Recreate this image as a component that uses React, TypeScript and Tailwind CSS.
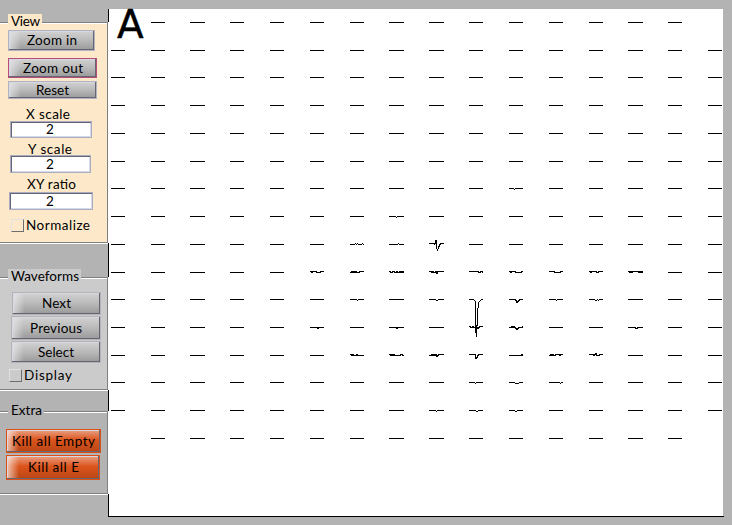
import React from "react";

const FONT = "font-['Lato','Noto_Sans',sans-serif]";

const rowY = [22, 50, 77, 105, 133, 161, 188, 216, 244, 272, 299, 327, 355, 382, 410, 438];
const colX = [111, 151, 190, 230, 270, 310, 350, 389, 429, 469, 509, 549, 589, 628, 668, 708];
const colW = [14, 14, 15, 14, 14, 14, 14, 15, 15, 14, 14, 14, 14, 15, 14, 14];

/* Pixel offsets of every sample below (+) or above (-) the baseline. */
const waves: Record<string, number[]> = {
  "6-10": [0, 0, 0, 0, 0, 1, 0, 0, 0, 0, 0, 0, 0, 0],
  "7-7": [0, 0, 0, 0, 0, 0, 0, 1, 0, 0, 0, 0, 0, 0, 0],
  "8-6": [0, 0, 0, 0, 0, -1, 0, -1, 0, 0, 0, 0, -1, 0],
  "8-7": [0, 0, 0, 0, 0, 0, 0, 0, 0, -1, 0, 0, 0, 0, 0],
  "9-5": [-1, 0, -1, -1, -1, -1, 0, 0, 0, 0, -1, -1, -1, -1],
  "9-6": [0, -1, 0, -1, 0, -1, 0, 0, 0, -1, -1, -1, -1, -1],
  "9-7": [-1, 0, 0, -1, -1, 0, 0, -1, 0, 0, -1, 0, -1, 0, -1],
  "9-8": [-1, -1, 0, -1, 0, 0, -1, 1, -1, -1, -1, -1, -1, -1, -1],
  "9-9": [-1, -1, -1, -1, -1, -1, -1, -1, -1, 0, 0, -1, -1, 0],
  "9-10": [-1, 0, -1, -1, -1, -1, 0, 0, 0, 0, 0, 0, -1, -1],
  "9-11": [-1, -1, -1, -1, -1, 0, 0, 0, 0, 0, 0, -1, -1, -1],
  "9-12": [-1, 0, -1, -1, -1, -1, -1, 0, 0, -1, -1, -1, -1, -1],
  "9-13": [-1, 0, -1, 0, -1, -1, -1, -1, -1, -1, 0, -1, 0, -1, 0],
  "10-6": [0, 0, 0, 0, 0, 0, 0, 1, 0, 0, 0, 0, 0, 0],
  "10-8": [0, 0, 0, 0, 0, 0, 0, 1, 1, 0, 0, 0, 0, 0, 0],
  "10-10": [0, 0, 0, 0, 0, 0, 1, 3, 2, 1, 0, 0, 0, 0],
  "10-11": [0, 0, 0, 0, 0, 0, 0, 1, 0, 0, 0, 0, 0, 0],
  "10-12": [0, 0, 0, 0, 0, 0, 1, 1, 0, 1, 0, 0, 0, 0],
  "11-5": [0, 0, 0, 0, 0, 0, 0, 1, 0, 0, 0, 0, 0, 0],
  "11-7": [0, 0, 0, 0, 0, 0, 0, 1, 0, 0, 0, 0, 0, 0, 0],
  "11-9": [-1, 0, 0, -1, 0, 0, 0, 0, 1, 0, -1, -1, -1, -1],
  "11-10": [0, 0, -1, 0, -1, 0, 1, 2, 1, 0, 0, 0, 0, -1],
  "11-13": [0, 0, 0, 0, 0, 0, 0, 1, 1, 0, 0, 0, 0, 0, 0],
  "12-6": [-1, 0, -1, 0, 0, 0, -1, 0, 0, 0, 0, 0, 0, 0],
  "12-7": [-1, 0, -1, 0, -1, 0, 0, 0, 0, 0, 0, -1, -1, 0, 0],
  "12-8": [0, 0, -1, 0, -1, 0, -1, 1, 0, -1, -1, -1, -1, -1, -1],
  "12-9": [-1, -1, -1, -1, -1, -1, 3, 2, 0, -1, -1, -1, -1, -1],
  "12-10": [0, 0, 0, 0, 0, 0, 0, 0, 0, 0, 0, 0, -1, 0],
  "12-11": [0, -1, 0, -1, 0, 0, -1, -1, -1, -1, 0, -1, -1, -1],
  "12-12": [-1, -1, -1, -1, 0, -1, -2, 0, 0, 0, -1, -1, -1, -1],
  "13-9": [0, 0, 0, 0, 0, 0, 1, 0, 0, 0, 0, 0, 0, 0],
  "13-10": [0, 0, 0, 0, 0, 0, 1, 1, 1, 1, 0, 0, 0, 0],
  "13-11": [0, 0, 0, 0, 0, 0, 0, 0, 0, 0, 0, 1, 0, 0],
  "14-8": [0, 0, 0, 0, 0, 0, 0, 1, 0, 0, 0, 0, 0, 0, 0],
  "14-9": [0, 0, 0, 0, 0, 0, 0, 1, 1, 0, 0, 0, 0, 0],
  "14-10": [0, 0, 0, 0, 0, 0, 1, 1, 0, 0, 0, 0, 0, 0],
};

const spikeUnit =
  "M429 243h6v-3h2v9h1v-3h1v-2h1v-1h4v1h-3v1h-1v2h-1v2h-1v2h-1v-2h-1v-5h-1v1h-1v-1h-5z";
const tallUnit =
  "M469 299h5v1h-5zM474 300h1v1h-1zM475 301h1v32h-1zM476 325h1v12h-1zM477 308h1v18h-1zM478 302h1v6h-1zM479 301h1v1h-1zM480 300h1v1h-1zM481 299h2v1h-2z";

function trace(r: number, c: number) {
  const key = r + "-" + c;
  if (key === "8-8") return spikeUnit;
  const wave = waves[key];
  if (key === "10-9") return tallUnit;
  if (!wave) return `M${colX[c]} ${rowY[r]}h${colW[c]}v1h-${colW[c]}z`;
  const joined = r === 9 || r === 11 || r === 12 || key === "10-10";
  return wave
    .map((d, i) => {
      // Noisy rows join neighbouring samples with a vertical stroke.
      const prev = joined && i > 0 ? wave[i - 1] : d;
      const top = Math.min(prev, d);
      return `M${colX[c] + i} ${rowY[r] + top}h1v${Math.abs(prev - d) + 1}h-1z`;
    })
    .join("");
}

function Electrodes() {
  const paths: string[] = [];
  rowY.forEach((_, r) =>
    colX.forEach((_x, c) => {
      if ((r === 0 || r === 15) && (c === 0 || c === 15)) return;
      paths.push(trace(r, c));
    })
  );
  return (
    <svg className="block" width="614" height="507" viewBox="109 9 614 507" shapeRendering="crispEdges">
      {paths.map((d, i) => (
        <path key={i} d={d} fill="#000" />
      ))}
    </svg>
  );
}

function Label({ text, width }: { text: string; width: number }) {
  return (
    <svg className="block shrink-0 overflow-visible" width={width} height="14">
      <text x="0" y="11" fontSize="13.5" textLength={width} lengthAdjust="spacing" className="fill-black">
        {text}
      </text>
    </svg>
  );
}

function Button({ text, width, box, tone = "grey" }: { text: string; width: number; box: string; tone?: string }) {
  const skin =
    tone === "orange"
      ? "border-[#dc5018] bg-[linear-gradient(90deg,rgba(255,255,255,.65)_0,rgba(255,255,255,0)_12px),linear-gradient(180deg,#e9a184_0%,#dc541c_45%,#b94615_100%)]"
      : (tone === "active" ? "border-[#b84c7c] " : tone === "plain" ? "border-[#b3b3b8] " : "border-[#b0b3c0] ") +
        "bg-[linear-gradient(90deg,rgba(235,235,240,.7)_0,rgba(235,235,240,0)_12px),linear-gradient(180deg,#d2d2d2_0%,#b9b9b9_50%,#999_100%)]";
  return (
    <div className={`flex shrink-0 items-center justify-center border pt-px shadow-[inset_-1px_-1px_#656574,inset_1px_1px_#d8d8e0] ${skin} ${box}`}>
      <Label text={text} width={width} />
    </div>
  );
}

function Input({ box }: { box: string }) {
  return (
    <div className={`flex shrink-0 items-center justify-center border border-[#a9adbf] bg-white pt-px pr-[2px] shadow-[inset_1px_1px_#656574,inset_-1px_-1px_#d6d9e6] ${box}`}>
      <Label text="2" width={8} />
    </div>
  );
}

function Check({ text, width, box }: { text: string; width: number; box: string }) {
  return (
    <div className={`flex h-[14px] shrink-0 items-start gap-[2px] ${box}`}>
      <div className="h-[13px] w-[13px] border border-t-[#e2e2e2] border-l-[#e2e2e2] border-r-[#6f6f6f] border-b-[#6f6f6f]" />
      <Label text={text} width={width} />
    </div>
  );
}

function Panel({ title, width, legend, box, children }: { title: string; width: number; legend: string; box: string; children: React.ReactNode }) {
  return (
    <div className="bg-white pr-px">
      <section className={`flex flex-col border-t border-r border-b border-[#808080] shadow-[inset_0_1px_#fff,0_1px_#fff] ${box}`}>
        <div className={`-mt-[9px] ml-[8px] flex h-[16px] shrink-0 items-center pl-[3px] ${legend}`}>
          <Label text={title} width={width} />
        </div>
        {children}
      </section>
    </div>
  );
}

export default function App() {
  return (
    <main className={`flex h-[525px] w-[732px] overflow-hidden bg-[#b3b3b3] pt-[9px] font-normal text-black ${FONT}`}>
      <aside className="flex h-[508px] w-[109px] shrink-0 flex-col">
        <div className="h-[13px] border-r border-black" />
        <Panel title="View" width={29} legend="w-[34px] bg-[#fde9ca]" box="h-[221px] bg-[#fde9ca]">
          <Button text="Zoom in" width={50} box="ml-[8px] h-[21px] w-[87px]" />
          <Button text="Zoom out" width={60} tone="active" box="mt-[7px] ml-[8px] h-[20px] w-[89px]" />
          <Button text="Reset" width={33} box="mt-[3px] ml-[8px] h-[18px] w-[89px]" />
          <div className="mt-[9px] ml-[26px]"><Label text="X scale" width={44} /></div>
          <Input box="-mt-px ml-[10px] h-[17px] w-[82px]" />
          <div className="mt-[5px] ml-[28px]"><Label text="Y scale" width={44} /></div>
          <Input box="-mt-[2px] ml-[10px] h-[18px] w-[81px]" />
          <div className="mt-[5px] ml-[27px]"><Label text="XY ratio" width={49} /></div>
          <Input box="ml-[9px] h-[18px] w-[84px]" />
          <Check text="Normalize" width={64} box="mt-[9px] ml-[11px]" />
        </Panel>
        <div className="h-[34px] border-r border-black" />
        <Panel title="Waveforms" width={68} legend="w-[73px] bg-[#cbcbcb]" box="h-[113px] bg-[#cbcbcb]">
          <Button text="Next" width={29} tone="plain" box="mt-[7px] ml-[12px] h-[23px] w-[89px]" />
          <Button text="Previous" width={52} tone="plain" box="mt-px ml-[11px] h-[24px] w-[90px]" />
          <Button text="Select" width={36} tone="plain" box="mt-px ml-[11px] h-[22px] w-[90px]" />
          <Check text="Display" width={48} box="mt-[6px] ml-[9px]" />
        </Panel>
        <div className="h-[21px] border-r border-black" />
        <Panel title="Extra" width={31} legend="w-[36px] bg-[#b3b3b3]" box="h-[83px] bg-[#b3b3b3]">
          <Button text="Kill all Empty" width={83} tone="orange" box="mt-[10px] ml-[6px] h-[24px] w-[95px]" />
          <Button text="Kill all E" width={51} tone="orange" box="mt-[2px] ml-[6px] h-[25px] w-[94px]" />
        </Panel>
        <div className="grow border-r border-black" />
      </aside>
      <section className="relative flex w-[615px] flex-col">
        <div className="h-[507px] w-[614px] bg-white">
          <Electrodes />
        </div>
        <div className="-ml-px h-px w-[616px] bg-black" />
        <span className="absolute -top-[7px] left-[8px] font-['DejaVu_Sans',sans-serif] text-[39px] leading-[46px] [-webkit-text-stroke:0.4px_black]">A</span>
      </section>
    </main>
  );
}
